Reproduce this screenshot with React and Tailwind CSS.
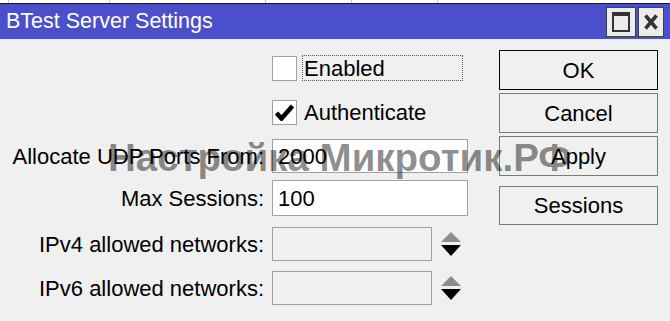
import React from 'react';

const FONT = { fontFamily: '"Liberation Sans", Arial, sans-serif' };

// one row of the form: right-aligned label, then the control
const FieldRow = ({ label, top, height, children }) => (
  <div className="flex items-center" style={{ marginTop: top, height }}>
    <div className="w-[265px] pr-[1px] text-right whitespace-nowrap">{label}</div>
    <div className="ml-[7px] flex items-center h-full">{children}</div>
  </div>
);

const Checkbox = ({ checked }) => (
  <div className="w-[25px] h-[25px] bg-white border border-[#a0a0a0] flex items-center justify-center">
    {checked && (
      <svg width="19" height="17" viewBox="0 0 19 17">
        <path d="M1.5 9 L6.5 14.5 L17.5 2" fill="none" stroke="#000" strokeWidth="4.5" />
      </svg>
    )}
  </div>
);

const Spinner = () => (
  <svg width="20" height="25" viewBox="0 0 20 25" className="ml-[9px]">
    <polygon points="10,0 20,10 0,10" fill="#8d8d8d" />
    <polygon points="0,13 20,13 10,24" fill="#000" />
  </svg>
);

const Btn = ({ children, def, h = 40, mt = 0 }) => (
  <div
    className={`w-[159px] flex items-center justify-center bg-[#f0f0f0] border ${def ? 'border-black' : 'border-[#7a7a7a]'}`}
    style={{ height: h, marginTop: mt }}
  >
    {children}
  </div>
);

export default function App() {
  return (
    <div className="w-[670px] h-[321px] bg-[#f0f0f0] relative overflow-hidden text-[22px] text-black" style={FONT}>
      {/* strip of the table behind the window */}
      <div className="h-[3px] bg-white flex">
        <div className="w-[9px] border-r border-[#c8c8c8]" />
        <div className="w-[101px] border-r border-[#c8c8c8]" />
        <div className="w-[156px] border-r border-[#c8c8c8]" />
        <div className="w-[86px] border-r border-[#c8c8c8]" />
        <div className="w-[86px] border-r border-[#c8c8c8]" />
      </div>
      <div className="h-[1px] bg-[#1a1a1a]" />

      {/* title bar */}
      <div className="h-[35px] bg-[#4b4fc9] flex items-center pl-[6px] pr-[6px]">
        <span className="text-white text-[21.5px] leading-none">BTest Server Settings</span>
        <div className="ml-auto flex gap-[2px] items-center">
          <div className="w-[30px] h-[30px] bg-[#ececec] border border-[#404040] flex items-center justify-center">
            <div className="w-[18px] h-[20px] border-2 border-t-4 border-[#333]" />
          </div>
          <div className="w-[26px] h-[30px] bg-[#ececec] border border-[#404040] flex items-center justify-center">
            <svg width="14" height="16" viewBox="0 0 14 16">
              <path d="M1.5 1.5 L12.5 14.5 M12.5 1.5 L1.5 14.5" stroke="#333" strokeWidth="3.5" />
            </svg>
          </div>
        </div>
      </div>

      <div className="flex">
        {/* form */}
        <div className="w-[499px] flex flex-col">
          <div className="flex items-center mt-[16px] h-[26px] pl-[272px]">
            <Checkbox />
            <div className="ml-[5px] w-[161px] h-[26px] border border-dotted border-[#555] flex items-center pl-[1px]">
              Enabled
            </div>
          </div>
          <div className="flex items-center mt-[18px] h-[26px] pl-[272px]">
            <Checkbox checked />
            <span className="ml-[7px]">Authenticate</span>
          </div>
          <FieldRow label="Allocate UDP Ports From:" top={14} height={34}>
            <div className="w-[196px] h-[34px] bg-white border border-[#a0a0a0] flex items-center pl-[5px]">2000</div>
          </FieldRow>
          <FieldRow label="Max Sessions:" top={7} height={36}>
            <div className="w-[196px] h-[36px] bg-white border border-[#a0a0a0] flex items-center pl-[5px]">100</div>
          </FieldRow>
          <FieldRow label="IPv4 allowed networks:" top={11} height={34}>
            <div className="w-[160px] h-[34px] bg-[#f0f0f0] border border-[#a0a0a0]" />
            <Spinner />
          </FieldRow>
          <FieldRow label="IPv6 allowed networks:" top={10} height={34}>
            <div className="w-[160px] h-[34px] bg-[#f0f0f0] border border-[#a0a0a0]" />
            <Spinner />
          </FieldRow>
        </div>

        {/* buttons */}
        <div className="flex flex-col pt-[11px]">
          <Btn def>OK</Btn>
          <Btn mt={3}>Cancel</Btn>
          <Btn mt={3}>Apply</Btn>
          <Btn mt={10} h={39}>Sessions</Btn>
        </div>
      </div>

      {/* watermark over the dialog */}
      <div className="absolute left-[108px] top-[139px] text-[38.5px] leading-none font-bold text-black/45 whitespace-nowrap pointer-events-none">
        Настройка Микротик.РФ
      </div>
    </div>
  );
}
